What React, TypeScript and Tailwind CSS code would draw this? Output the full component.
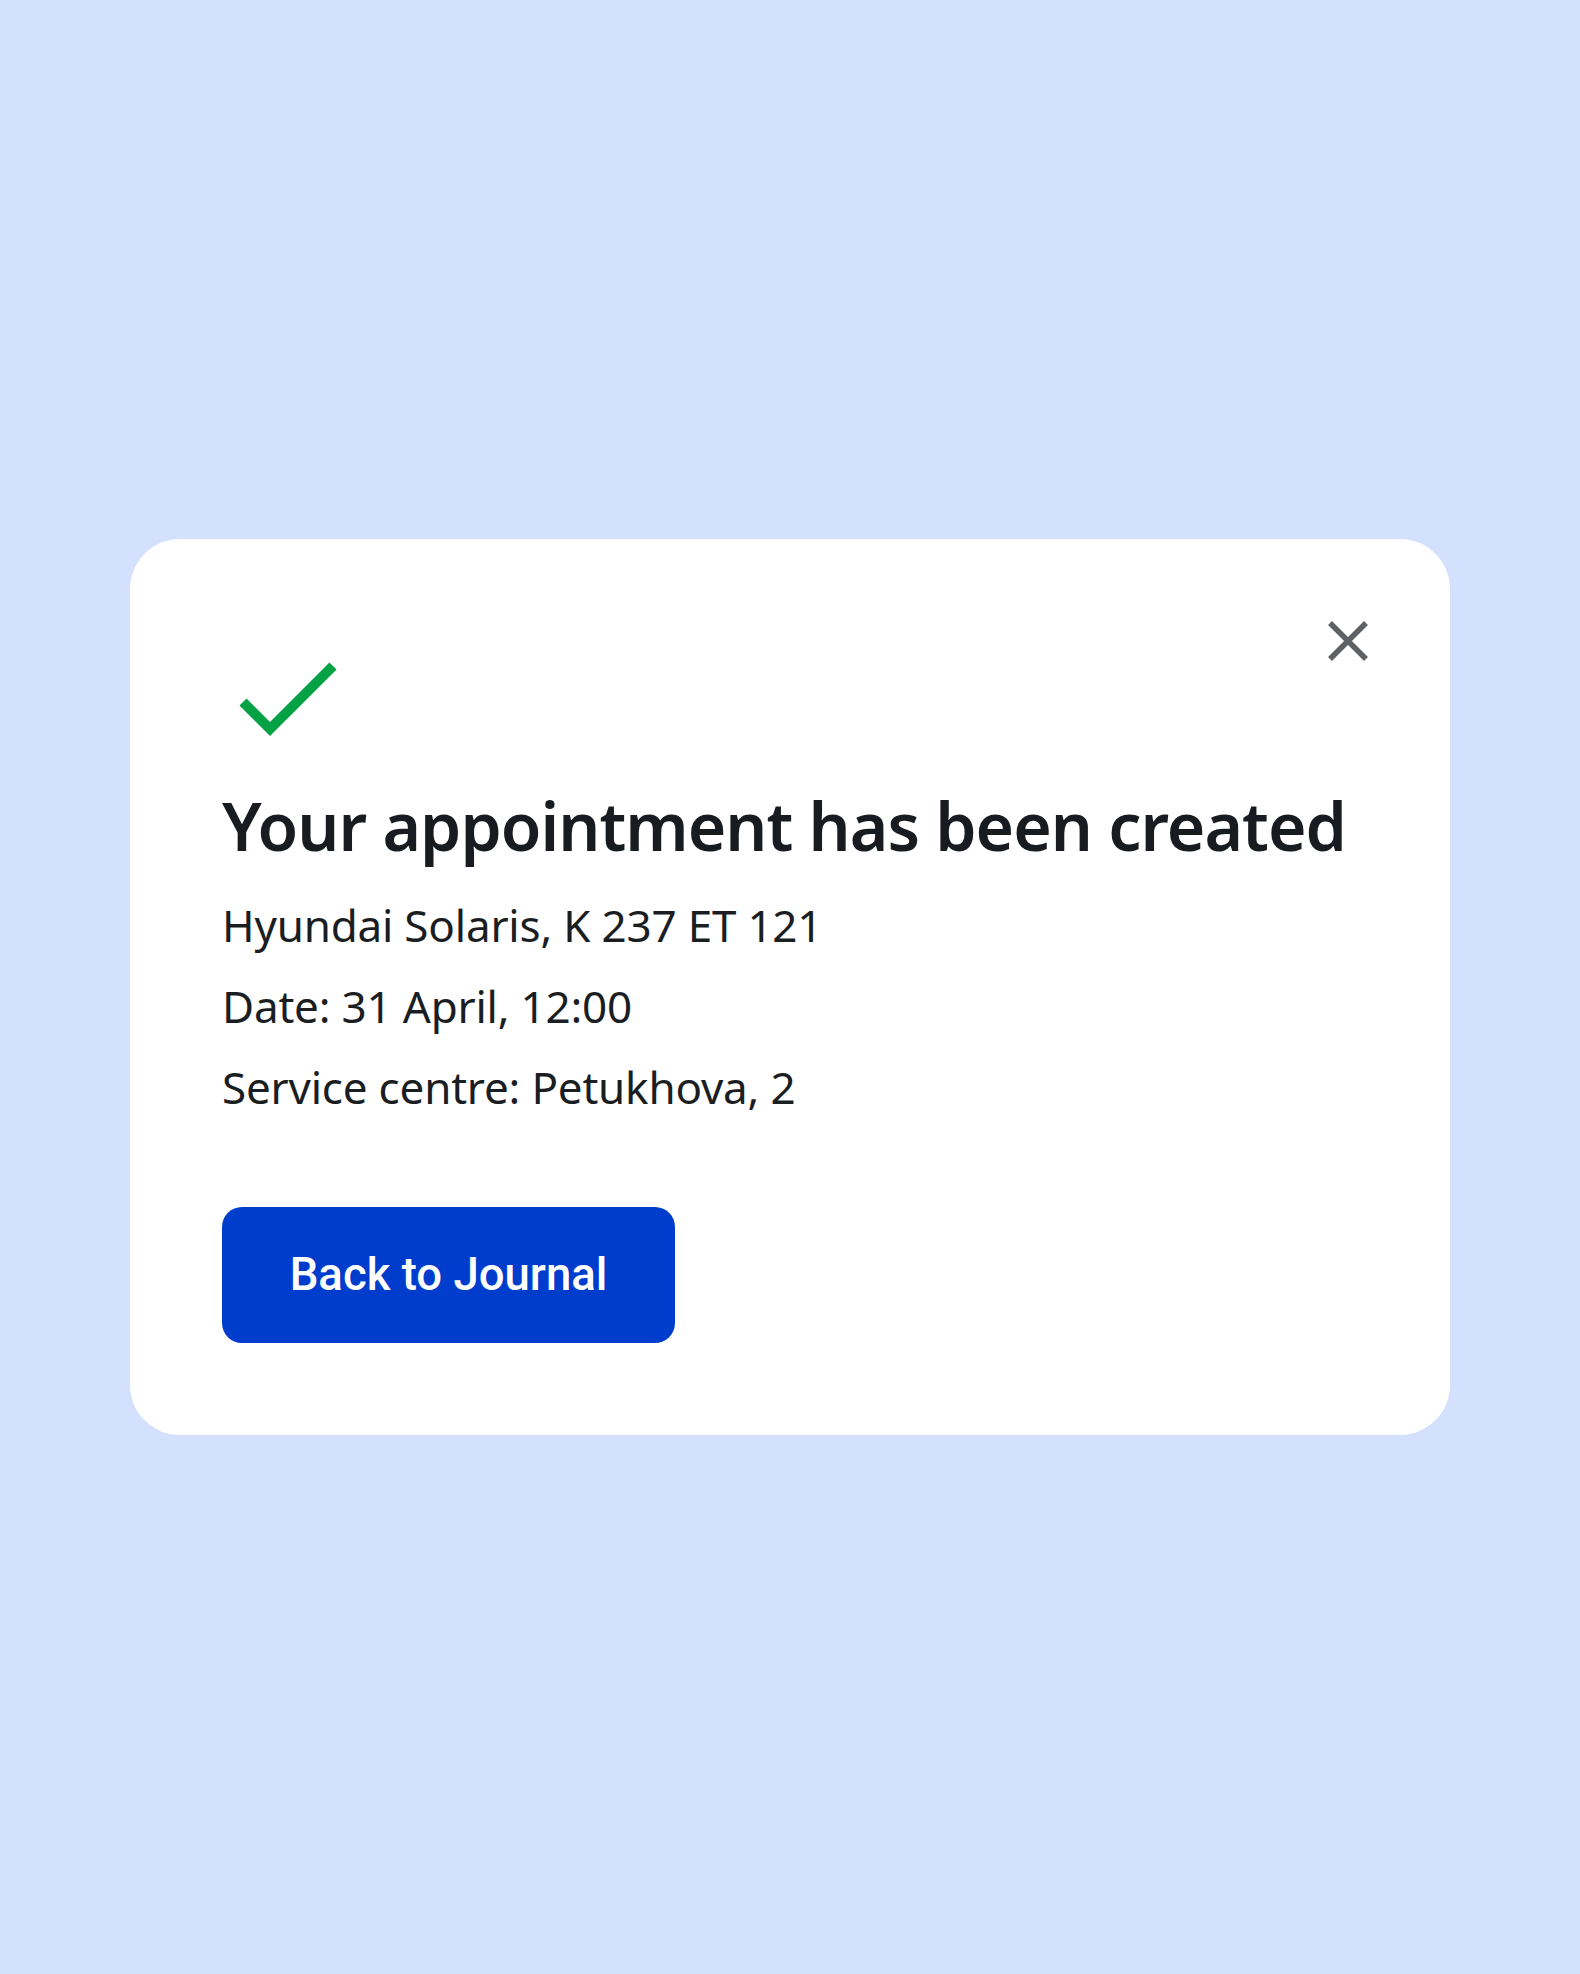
import React from 'react';

const details = ['Hyundai Solaris, K 237 ET 121', 'Date: 31 April, 12:00', 'Service centre: Petukhova, 2'];

function CheckIcon() {
  return (
    <svg width="118" height="80" viewBox="0 0 118 80" fill="none" className="block">
      <path d="M21 43 L48 70 L111 7" stroke="#04a244" strokeWidth="10" strokeLinecap="butt" strokeLinejoin="miter" />
    </svg>
  );
}

function CloseIcon() {
  return (
    <svg width="44" height="44" viewBox="0 0 44 44" fill="none" className="block">
      <path d="M4 4 L40 40 M40 4 L4 40" stroke="#5f6265" strokeWidth="5.5" />
    </svg>
  );
}

export default function App() {
  return (
    <div className="flex min-h-[1974px] w-full items-center justify-center bg-[#d3e0fe]">
      <div className="relative w-[1320px] rounded-[50px] bg-white pb-[92px] pl-[92px] pr-[92px] pt-[120px]">
        <button type="button" aria-label="Close" className="absolute right-[80px] top-[80px]">
          <CloseIcon />
        </button>

        <CheckIcon />

        <h1 className="mt-[53px] whitespace-nowrap text-[66px] font-semibold leading-[66px] tracking-[-0.95px] text-[#181c20] [font-family:'Noto_Sans',sans-serif]">
          Your appointment has been created
        </h1>

        <div className="mt-[27px] whitespace-nowrap text-[44px] leading-[81px] tracking-[-0.2px] text-[#1a1e22] [font-family:'Noto_Sans',sans-serif]">
          {details.map((line) => (
            <p key={line}>{line}</p>
          ))}
        </div>

        <button
          type="button"
          className="mt-[79px] flex h-[136px] w-[453px] items-center justify-center rounded-[20px] bg-[#003dcc] text-[45.5px] font-medium text-white [font-family:Roboto,sans-serif]"
        >
          Back to Journal
        </button>
      </div>
    </div>
  );
}
